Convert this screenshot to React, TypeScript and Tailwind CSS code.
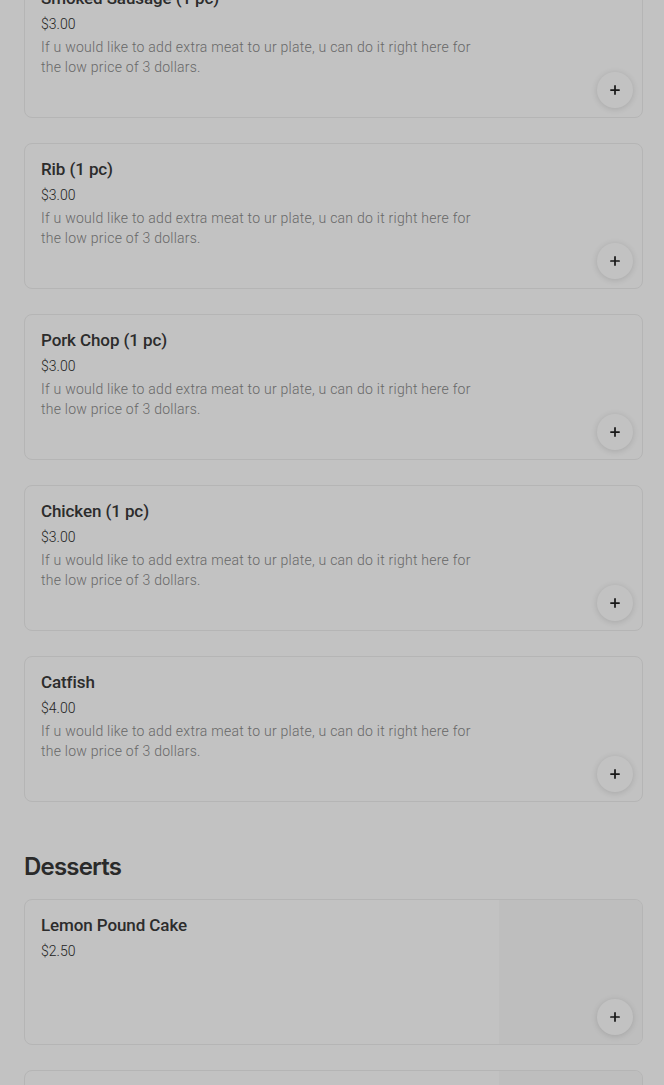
import React from 'react';
import { Plus } from 'lucide-react';

type Item = { name: string; price: string; desc?: string; image?: boolean };

const meats: Item[] = [
  'Smoked Sausage (1 pc)',
  'Rib (1 pc)',
  'Pork Chop (1 pc)',
  'Chicken (1 pc)',
].map((name) => ({
  name,
  price: '$3.00',
  desc: 'If u would like to add extra meat to ur plate, u can do it right here for the low price of 3 dollars.',
}));

meats.push({
  name: 'Catfish',
  price: '$4.00',
  desc: 'If u would like to add extra meat to ur plate, u can do it right here for the low price of 3 dollars.',
});

const desserts: Item[] = [
  { name: 'Lemon Pound Cake', price: '$2.50', image: true },
  { name: 'Peach Cobbler', price: '$3.00', image: true },
];

function MenuCard({ item }: { item: Item }) {
  return (
    <div className="relative flex h-[146px] overflow-hidden rounded-lg border border-[#eeeeee] bg-white">
      <div className="flex-1 px-4 pt-[13px]">
        <h3 className="text-[17px] leading-6 font-medium tracking-[-0.1px] text-[#3a3a3a]">{item.name}</h3>
        <p className="mt-[4px] text-sm leading-5 font-light text-[#2e2e2e]">{item.price}</p>
        {item.desc && (
          <p className="mt-[3px] max-w-[440px] text-sm leading-5 font-light tracking-[0.25px] text-[#8a8a8a]">
            {item.desc}
          </p>
        )}
      </div>
      {item.image && <div className="w-[143px] bg-[#fafafa]" />}
      <button className="absolute right-[9px] bottom-[9px] flex h-9 w-9 items-center justify-center rounded-full bg-white shadow-[0_1px_6px_rgba(0,0,0,0.14)]">
        <Plus className="h-[14px] w-[14px] text-[#222222]" strokeWidth={3} />
      </button>
    </div>
  );
}

export default function App() {
  return (
    <div className="relative min-h-screen overflow-hidden bg-white font-['Roboto',sans-serif]">
      <div className="-mt-[28px] pl-6 pr-[21px]">
        <div className="flex flex-col gap-[25px]">
          {meats.map((item) => (
            <MenuCard key={item.name} item={item} />
          ))}
        </div>
        <h2 className="mt-[49px] mb-[16px] font-['Inter',sans-serif] text-2xl leading-8 font-semibold tracking-[-0.8px] text-[#383838]">
          Desserts
        </h2>
        <div className="flex flex-col gap-[25px]">
          {desserts.map((item) => (
            <MenuCard key={item.name} item={item} />
          ))}
        </div>
      </div>
      <div className="fixed inset-0 bg-black/[0.24]" />
    </div>
  );
}
